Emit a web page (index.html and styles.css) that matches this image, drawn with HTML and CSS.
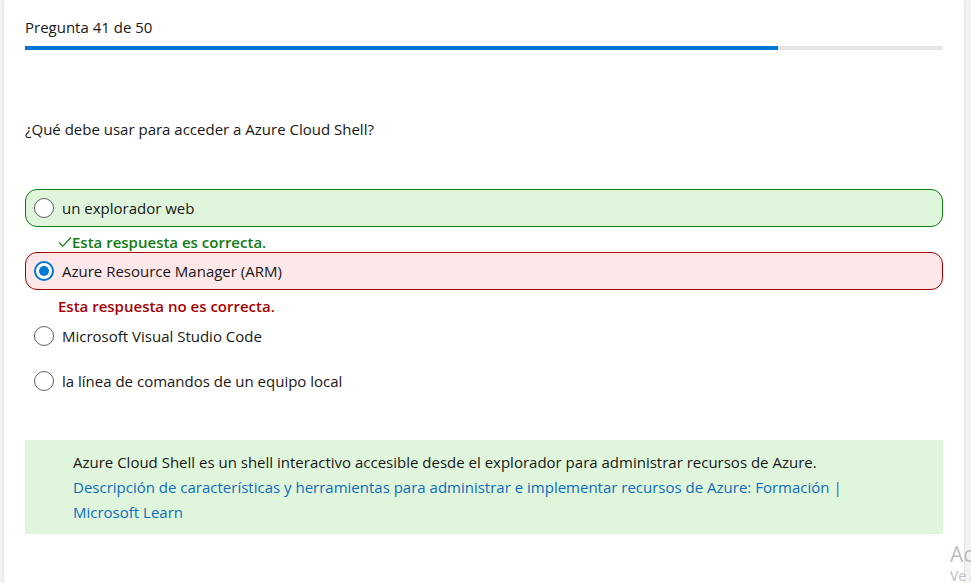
FILE: index.html
```html
<!DOCTYPE html>
<html lang="es">
<head>
<meta charset="utf-8">
<link rel="stylesheet" href="styles.css">
</head>
<body>
<div class="panel">
  <div class="header">
    <div class="counter">Pregunta 41 de 50</div>
    <div class="progress"><div class="progress-fill" style="width:82%"></div></div>
  </div>
  <p class="question">¿Qué debe usar para acceder a Azure Cloud Shell?</p>
  <div class="options">
    <div class="option correct"><span class="radio"></span><span>un explorador web</span></div>
    <div class="feedback ok"><svg class="check" width="14" height="12" viewBox="0 0 14 12"><path d="M1 6.5 L4.8 10.2 L13 1.5" fill="none" stroke="#107c10" stroke-width="1.2"/></svg>Esta respuesta es correcta.</div>
    <div class="option wrong"><span class="radio selected"></span><span>Azure Resource Manager (ARM)</span></div>
    <div class="feedback bad">Esta respuesta no es correcta.</div>
    <div class="option plain"><span class="radio"></span><span>Microsoft Visual Studio Code</span></div>
    <div class="option plain"><span class="radio"></span><span>la línea de comandos de un equipo local</span></div>
  </div>
  <div class="explain">
    <p>Azure Cloud Shell es un shell interactivo accesible desde el explorador para administrar recursos de Azure.</p>
    <p class="links"><a href="#">Descripción de características y herramientas para administrar e implementar recursos de Azure: Formación | Microsoft Learn</a></p>
  </div>
</div>
<div class="watermark"><div class="wm1">Activar Windows</div><div class="wm2">Ve a Configuración para activar Windows.</div></div>
</body>
</html>
```
FILE: styles.css
```css
html, body { margin: 0; padding: 0; }
body {
  background: #f3f3f3;
  font-family: "Open Sans", "Noto Sans", sans-serif;
  font-size: 15px;
  color: #171717;
  width: 971px;
  height: 583px;
  overflow: hidden;
  position: relative;
}
.panel {
  margin-left: 4px;
  width: 960px;
  height: 583px;
  background: #ffffff;
  box-shadow: 0 0 3px rgba(0,0,0,0.12);
  padding: 0 21px;
  box-sizing: border-box;
}
.header { padding-top: 17px; }
.counter { line-height: 20px; height: 20px; }
.progress {
  margin-top: 9px;
  height: 4px;
  background: #e6e6e6;
}
.progress-fill { height: 100%; background: #0078d4; }
.question { margin: 69px 0 0; line-height: 20px; }
.options { margin-top: 50px; display: flex; flex-direction: column; }
.option {
  display: flex;
  align-items: center;
  height: 38px;
  box-sizing: border-box;
  border: 1px solid transparent;
  border-radius: 12px;
  padding-left: 8px;
  gap: 8px;
}
.option.correct { background: #dff6dd; border-color: #107c10; }
.option.wrong { background: #fde7e9; border-color: #a80000; }
.option.plain + .option.plain { margin-top: 7px; }
.radio {
  width: 20px; height: 20px;
  box-sizing: border-box;
  border: 1px solid #616161;
  border-radius: 50%;
  background: #fff;
  display: flex; align-items: center; justify-content: center;
  flex: none;
}
.radio.selected { border: 2px solid #0078d4; }
.radio.selected::after {
  content: ""; width: 10px; height: 10px; border-radius: 50%; background: #0078d4;
}
.feedback {
  font-weight: 600;
  padding-left: 33px;
  padding-top: 4px;
  line-height: 20px;
  box-sizing: border-box;
  display: flex;
  align-items: center;
}
.feedback.ok { color: #107c10; height: 25px; }
.feedback.bad { color: #a80000; height: 27px; }
.check { margin-right: 0; flex: none; }
.explain {
  margin-top: 40px;
  background: #dff6dd;
  padding: 10px 48px 9px;
  line-height: 25px;
}
.explain p { margin: 0; }
.explain a { color: #0f6cbd; text-decoration: none; }
.watermark {
  position: absolute;
  left: 950px;
  top: 540px;
  color: #bdbdbd;
  white-space: nowrap;
}
.wm1 { font-size: 21px; line-height: 28px; }
.wm2 { font-size: 14px; line-height: 16px; }
```
